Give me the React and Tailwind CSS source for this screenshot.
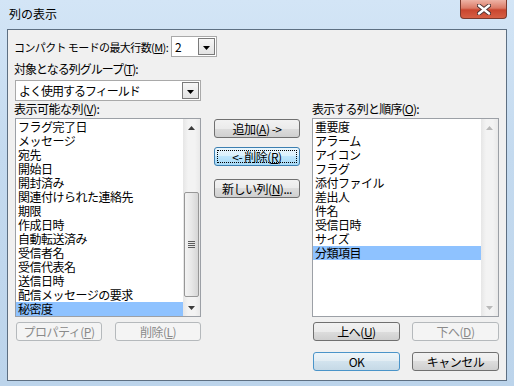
import React from "react";

const F = "font-['Noto_Sans_CJK_JP','Noto_Sans_CJK_SC',sans-serif]";

function Tri({ up = false, color = "#000" }) {
  return (
    <svg width="7" height="4" viewBox="0 0 7 4" className="block">
      {up ? <path d="M0 4H7L3.5 0Z" fill={color} /> : <path d="M0 0H7L3.5 4Z" fill={color} />}
    </svg>
  );
}

function Combo({ value, className = "" }) {
  return (
    <div className={`flex h-[21px] border border-[#a9a9a9] bg-white p-[1px] ${className}`}>
      <div className="flex-1 whitespace-nowrap pl-[2px] text-[12px] leading-[17px] tracking-[-1px] text-black">{value}</div>
      <div className="flex w-[17px] items-center justify-center border border-[#7a7a7a] bg-[linear-gradient(180deg,#f7f7f7,#e3e3e3)] pt-[2px]">
        <Tri />
      </div>
    </div>
  );
}

function Btn({ children, disabled, def, focus, className = "" }) {
  let cls =
    "flex h-[19px] items-center justify-center whitespace-nowrap rounded-[3px] border text-[12px] leading-none tracking-[-0.5px] ";
  if (disabled) cls += "border-[#b5b9bc] bg-[#f4f4f4] text-[#8a8a8a]";
  else if (focus)
    cls += "border-[#3c7fb1] bg-[linear-gradient(180deg,#eaf6fd_0%,#d9f0fc_50%,#bee6fd_50%,#a7d9f5_100%)] text-black";
  else if (def)
    cls += "border-[#4a94c9] bg-[linear-gradient(180deg,#eef5f9_0%,#e1ecf3_50%,#d2e3ee_50%,#c5d9e6_100%)] text-black";
  else
    cls += "border-[#707070] bg-[linear-gradient(180deg,#f2f2f2_0%,#ebebeb_50%,#dddddd_50%,#cfcfcf_100%)] text-black";
  return (
    <div className={`${cls} ${className}`}>
      {focus ? (
        <div className="m-[2px] flex h-[13px] flex-1 items-center justify-center border border-dotted border-black">
          {children}
        </div>
      ) : (
        children
      )}
    </div>
  );
}

function ScrollBar({ enabled }) {
  const c = enabled ? "#3b3b3b" : "#b9b9b9";
  return (
    <div className="flex w-[17px] flex-col bg-[linear-gradient(90deg,#e6e6e6,#f3f3f3_30%,#f3f3f3_70%,#e9e9e9)]">
      <div className="flex h-[17px] items-center justify-center">
        <Tri up color={c} />
      </div>
      <div className="flex flex-1 flex-col">
        {enabled && (
          <div className="mx-[1px] mt-[56px] flex h-[105px] items-center justify-center rounded-[2px] border border-[#979797] bg-[linear-gradient(90deg,#f3f3f3,#e8e8e8_50%,#d6d6d6)]">
            <div className="flex flex-col gap-[1px]">
              <div className="h-[1px] w-[7px] bg-[#5c5c5c]" />
              <div className="h-[1px] w-[7px] bg-[#5c5c5c]" />
              <div className="h-[1px] w-[7px] bg-[#5c5c5c]" />
              <div className="h-[1px] w-[7px] bg-[#5c5c5c]" />
            </div>
          </div>
        )}
      </div>
      <div className="flex h-[17px] items-center justify-center">
        <Tri color={c} />
      </div>
    </div>
  );
}

function ListBox({ items, selected, enabled }) {
  return (
    <div className="flex h-[199px] border border-[#9ca0a6] bg-white">
      <div className="flex-1 pt-[1px]">
        {items.map((it) => (
          <div
            key={it}
            className={`h-[14px] whitespace-nowrap pl-[2px] text-[12px] leading-[14px] tracking-[-0.5px] text-black ${
              it === selected ? "bg-[#8ec2ff]" : ""
            }`}
          >
            {it}
          </div>
        ))}
      </div>
      <ScrollBar enabled={enabled} />
    </div>
  );
}

const LEFT = [
  "フラグ完了日",
  "メッセージ",
  "宛先",
  "開始日",
  "開封済み",
  "関連付けられた連絡先",
  "期限",
  "作成日時",
  "自動転送済み",
  "受信者名",
  "受信代表名",
  "送信日時",
  "配信メッセージの要求",
  "秘密度",
];

const RIGHT = [
  "重要度",
  "アラーム",
  "アイコン",
  "フラグ",
  "添付ファイル",
  "差出人",
  "件名",
  "受信日時",
  "サイズ",
  "分類項目",
];

export default function App() {
  return (
    <div
      className={`${F} flex h-[386px] w-[514px] flex-col overflow-hidden bg-[linear-gradient(180deg,#d3e5f6_0%,#c4daef_40%,#bcd4eb_100%)]`}
    >
      <div className="flex h-[29px] items-start pl-[9px] pr-[7px]">
        <span className="mt-[6px] text-[12px] leading-[16px] text-black">列の表示</span>
        <div className="ml-auto flex h-[19px] w-[47px] items-center justify-center rounded-b-[4px] border border-t-0 border-[#7b3a2e] bg-[linear-gradient(180deg,#eeb3a5_0%,#db7a66_45%,#c9462f_55%,#d65f44_100%)]">
          <svg width="14" height="11" viewBox="0 0 14 11">
            <path d="M2 1.5L12 9.5M12 1.5L2 9.5" stroke="#4a3030" strokeWidth="4.2" strokeLinecap="round" />
            <path d="M2 1.5L12 9.5M12 1.5L2 9.5" stroke="#ffffff" strokeWidth="2.4" strokeLinecap="round" />
          </svg>
        </div>
      </div>

      <div className="mx-[7px] flex h-[352px] flex-col border border-[#5d6f82] bg-[#f0f0f0] pl-[7px] pr-[7px] pt-[6px]">
        <div className="flex h-[21px] items-center">
          <div className="-ml-[1px] w-[157px] whitespace-nowrap text-[11px] leading-[16px] tracking-[-0.6px] text-black">
            コンパクト モードの最大行数(<u>M</u>):
          </div>
          <Combo value="2" className="w-[46px]" />
        </div>
        <div className="-ml-[1px] mt-[4px] h-[16px] whitespace-nowrap text-[12px] leading-[16px] tracking-[-1px] text-black">
          対象となる列グループ(<u>T</u>):
        </div>
        <Combo value="よく使用するフィールド" className="mt-[3px] w-[186px]" />

        <div className="flex">
          <div className="flex w-[186px] flex-col">
            <div className="-ml-[1px] h-[17px] whitespace-nowrap text-[12px] leading-[16px] tracking-[-0.5px] text-black">
              表示可能な列(<u>V</u>):
            </div>
            <ListBox items={LEFT} selected="秘密度" enabled />
            <div className="mt-[5px] flex gap-[13px] pl-[1px]">
              <Btn disabled className="w-[86px]">
                プロパティ(<u>P</u>)
              </Btn>
              <Btn disabled className="w-[86px]">
                削除(<u>L</u>)
              </Btn>
            </div>
          </div>

          <div className="ml-[13px] flex w-[86px] flex-col pt-[18px]">
            <Btn>
              追加(<u>A</u>) -&gt;
            </Btn>
            <Btn focus className="mt-[9px]">
              &lt;- 削除(<u>R</u>)
            </Btn>
            <Btn className="mt-[13px]">
              新しい列(<u>N</u>)...
            </Btn>
          </div>

          <div className="ml-[12px] flex w-[187px] flex-col">
            <div className="h-[17px] whitespace-nowrap text-[12px] leading-[16px] tracking-[-0.8px] text-black">
              表示する列と順序(<u>O</u>):
            </div>
            <ListBox items={RIGHT} selected="分類項目" enabled={false} />
            <div className="mt-[5px] flex gap-[12px] pl-[1px]">
              <Btn className="w-[87px]">
                上へ(<u>U</u>)
              </Btn>
              <Btn disabled className="w-[87px]">
                下へ(<u>D</u>)
              </Btn>
            </div>
            <div className="mt-[11px] flex gap-[12px] pl-[1px]">
              <Btn def className="w-[87px]">
                OK
              </Btn>
              <Btn className="w-[87px]">キャンセル</Btn>
            </div>
          </div>
        </div>
      </div>
    </div>
  );
}
